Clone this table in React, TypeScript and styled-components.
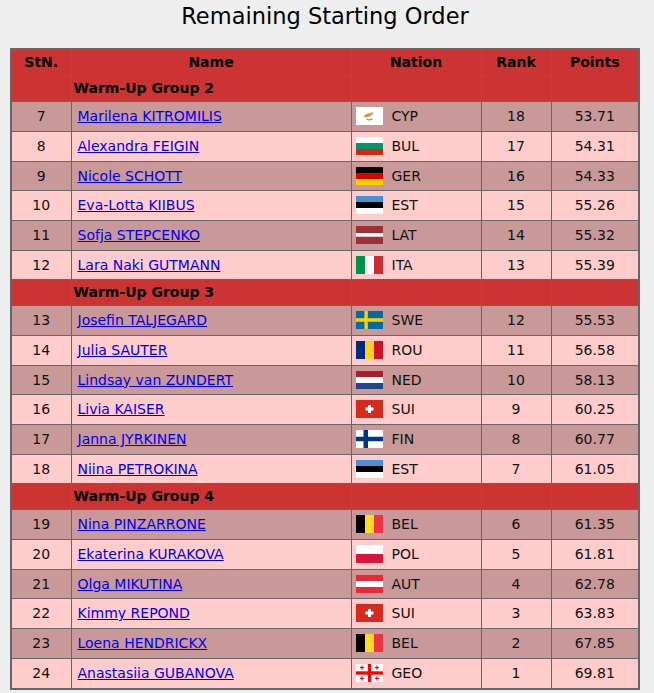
import React from "react";
import styled, { createGlobalStyle } from "styled-components";

const GlobalStyle = createGlobalStyle`
  html, body {
    margin: 0;
    padding: 0;
    background: #eeeeee;
  }
  body {
    font-family: "DejaVu Sans", Verdana, sans-serif;
    color: #000;
  }
`;

const Page = styled.div`
  width: 630px;
  margin: 0 10px;
`;

const Title = styled.h1`
  margin: 0;
  height: 48px;
  line-height: 32px;
  text-align: center;
  font-size: 22.5px;
  font-weight: normal;
  color: #000;
`;

const Table = styled.table`
  width: 628px;
  table-layout: fixed;
  border-collapse: collapse;
  border: 2px solid #666666;
  font-size: 14px;
`;

const HeadRow = styled.tr`
  height: 26px;
  background: #cc3333;
`;

const HeadCell = styled.th`
  border: 1px solid #666666;
  padding: 0;
  font-weight: bold;
  font-size: 14px;
  text-align: center;
  vertical-align: middle;
`;

const GroupRow = styled.tr`
  height: 26px;
  background: #cc3333;
`;

const GroupCell = styled.td<{ $label?: boolean }>`
  border: 1px solid #666666;
  padding: 0 0 0 ${(p) => (p.$label ? "2px" : "0")};
  font-weight: bold;
  text-align: left;
  vertical-align: middle;
`;

const DataRow = styled.tr<{ $dark: boolean; $h: number }>`
  height: ${(p) => p.$h}px;
  background: ${(p) => (p.$dark ? "#c99999" : "#ffcccc")};
`;

const Cell = styled.td<{ $pad?: number; $align?: "left" | "center" }>`
  border: 1px solid #666666;
  padding: 0 0 0 ${(p) => p.$pad ?? 0}px;
  text-align: ${(p) => p.$align ?? "center"};
  vertical-align: middle;
  color: #111;
  white-space: nowrap;
`;

const NameLink = styled.a`
  color: #0000ee;
  text-decoration: underline;
`;

const NationBox = styled.div`
  display: flex;
  align-items: center;
  gap: 9px;
  padding-left: 4px;
`;

const FlagSvg = styled.svg`
  display: block;
  flex: none;
`;

type Code =
  | "CYP" | "BUL" | "GER" | "EST" | "LAT" | "ITA" | "SWE" | "ROU"
  | "NED" | "SUI" | "FIN" | "BEL" | "POL" | "AUT" | "GEO";

const hStripes = (cols: string[], ratios?: number[]) => {
  const r = ratios ?? cols.map(() => 1);
  const total = r.reduce((a, b) => a + b, 0);
  let y = 0;
  return cols.map((c, i) => {
    const h = (18 * r[i]) / total;
    const el = <rect key={i} x={0} y={y} width={27} height={h} fill={c} />;
    y += h;
    return el;
  });
};

const vStripes = (cols: string[]) =>
  cols.map((c, i) => <rect key={i} x={i * 9} y={0} width={9} height={18} fill={c} />);

const FlagContent: React.FC<{ code: Code }> = ({ code }) => {
  switch (code) {
    case "CYP":
      return (
        <>
          <rect width={27} height={18} fill="#ffffff" />
          <path d="M7.5 9 L10 7.2 L13.5 6.3 L17.5 5 L16.8 7 L14.8 8.8 L12 10 L9 10.2 Z" fill="#e0922f" />
          <path d="M10.5 12 Q13.5 13.6 16.5 12" stroke="#7aa36a" strokeWidth={1.2} fill="none" />
        </>
      );
    case "BUL":
      return <>{hStripes(["#ffffff", "#00966e", "#d62612"])}</>;
    case "GER":
      return <>{hStripes(["#000000", "#dd0000", "#ffce00"])}</>;
    case "EST":
      return <>{hStripes(["#4891d9", "#000000", "#ffffff"])}</>;
    case "LAT":
      return <>{hStripes(["#9e3039", "#ffffff", "#9e3039"], [2, 1, 2])}</>;
    case "ITA":
      return <>{vStripes(["#009246", "#ffffff", "#ce2b37"])}</>;
    case "SWE":
      return (
        <>
          <rect width={27} height={18} fill="#006aa7" />
          <rect x={8.4} y={0} width={3.4} height={18} fill="#fecc02" />
          <rect x={0} y={7.2} width={27} height={3.6} fill="#fecc02" />
        </>
      );
    case "ROU":
      return <>{vStripes(["#002b7f", "#fcd116", "#ce1126"])}</>;
    case "NED":
      return <>{hStripes(["#ae1c28", "#ffffff", "#21468b"])}</>;
    case "SUI":
      return (
        <>
          <rect width={27} height={18} fill="#d52b1e" />
          <rect x={12} y={5} width={3} height={8} fill="#ffffff" />
          <rect x={9.5} y={7.5} width={8} height={3} fill="#ffffff" />
        </>
      );
    case "FIN":
      return (
        <>
          <rect width={27} height={18} fill="#ffffff" />
          <rect x={7.5} y={0} width={4.5} height={18} fill="#003580" />
          <rect x={0} y={6.75} width={27} height={4.5} fill="#003580" />
        </>
      );
    case "BEL":
      return <>{vStripes(["#000000", "#fdda24", "#ef3340"])}</>;
    case "POL":
      return <>{hStripes(["#ffffff", "#dc143c"])}</>;
    case "AUT":
      return <>{hStripes(["#ed2939", "#ffffff", "#ed2939"])}</>;
    case "GEO":
      return (
        <>
          <rect width={27} height={18} fill="#ffffff" />
          <rect x={11.8} y={0} width={3.4} height={18} fill="#ff0000" />
          <rect x={0} y={7.3} width={27} height={3.4} fill="#ff0000" />
          {[
            [6, 3.6],
            [21, 3.6],
            [6, 14.4],
            [21, 14.4],
          ].map(([cx, cy], i) => (
            <g key={i} fill="#ff0000">
              <rect x={cx - 0.6} y={cy - 2} width={1.2} height={4} />
              <rect x={cx - 2} y={cy - 0.6} width={4} height={1.2} />
            </g>
          ))}
        </>
      );
  }
};

const Flag: React.FC<{ code: Code }> = ({ code }) => (
  <FlagSvg width={27} height={18} viewBox="0 0 27 18">
    <FlagContent code={code} />
  </FlagSvg>
);

type Skater = [number, string, Code, number, string];

const groups: { title: string; skaters: Skater[] }[] = [
  {
    title: "Warm-Up Group 2",
    skaters: [
      [7, "Marilena KITROMILIS", "CYP", 18, "53.71"],
      [8, "Alexandra FEIGIN", "BUL", 17, "54.31"],
      [9, "Nicole SCHOTT", "GER", 16, "54.33"],
      [10, "Eva-Lotta KIIBUS", "EST", 15, "55.26"],
      [11, "Sofja STEPCENKO", "LAT", 14, "55.32"],
      [12, "Lara Naki GUTMANN", "ITA", 13, "55.39"],
    ],
  },
  {
    title: "Warm-Up Group 3",
    skaters: [
      [13, "Josefin TALJEGARD", "SWE", 12, "55.53"],
      [14, "Julia SAUTER", "ROU", 11, "56.58"],
      [15, "Lindsay van ZUNDERT", "NED", 10, "58.13"],
      [16, "Livia KAISER", "SUI", 9, "60.25"],
      [17, "Janna JYRKINEN", "FIN", 8, "60.77"],
      [18, "Niina PETROKINA", "EST", 7, "61.05"],
    ],
  },
  {
    title: "Warm-Up Group 4",
    skaters: [
      [19, "Nina PINZARRONE", "BEL", 6, "61.35"],
      [20, "Ekaterina KURAKOVA", "POL", 5, "61.81"],
      [21, "Olga MIKUTINA", "AUT", 4, "62.78"],
      [22, "Kimmy REPOND", "SUI", 3, "63.83"],
      [23, "Loena HENDRICKX", "BEL", 2, "67.85"],
      [24, "Anastasiia GUBANOVA", "GEO", 1, "69.81"],
    ],
  },
];

const rowHeights = [30, 30, 29, 30, 30, 29];

export default function App() {
  return (
    <Page>
      <GlobalStyle />
      <Title>Remaining Starting Order</Title>
      <Table>
        <colgroup>
          <col style={{ width: 60 }} />
          <col style={{ width: 280 }} />
          <col style={{ width: 130 }} />
          <col style={{ width: 70 }} />
          <col style={{ width: 88 }} />
        </colgroup>
        <thead>
          <HeadRow>
            <HeadCell>StN.</HeadCell>
            <HeadCell>Name</HeadCell>
            <HeadCell>Nation</HeadCell>
            <HeadCell>Rank</HeadCell>
            <HeadCell>Points</HeadCell>
          </HeadRow>
        </thead>
        <tbody>
          {groups.map((g, gi) => (
            <React.Fragment key={g.title}>
              <GroupRow>
                <GroupCell />
                <GroupCell $label>{g.title}</GroupCell>
                <GroupCell />
                <GroupCell />
                <GroupCell />
              </GroupRow>
              {g.skaters.map(([stn, name, nat, rank, pts], i) => (
                <DataRow
                  key={stn}
                  $dark={i % 2 === 0}
                  $h={gi === groups.length - 1 && i === g.skaters.length - 1 ? 31 : rowHeights[i]}
                >
                  <Cell>{stn}</Cell>
                  <Cell $pad={6} $align="left">
                    <NameLink href="#">{name}</NameLink>
                  </Cell>
                  <Cell $align="left">
                    <NationBox>
                      <Flag code={nat} />
                      <span>{nat}</span>
                    </NationBox>
                  </Cell>
                  <Cell>{rank}</Cell>
                  <Cell>{pts}</Cell>
                </DataRow>
              ))}
            </React.Fragment>
          ))}
        </tbody>
      </Table>
    </Page>
  );
}
